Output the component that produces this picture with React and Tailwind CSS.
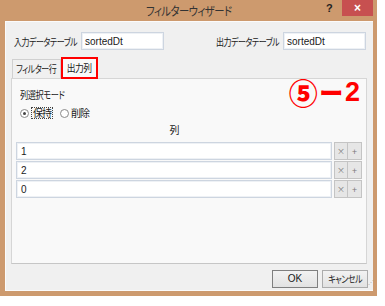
import React from "react";

const jp = { fontFamily: '"Noto Sans CJK JP", sans-serif', fontFeatureSettings: '"palt"' };

function Input({ value, className = "" }) {
  return (
    <div
      className={`h-[18px] bg-white border border-[#cdd5e0] shadow-[inset_0_0_0_1px_#eef1f5] flex items-center pl-[3px] text-[10px] text-[#1a1a1a] ${className}`}
      style={{ fontFamily: '"Liberation Sans", sans-serif' }}
    >
      {value}
    </div>
  );
}

function Row({ value }) {
  return (
    <div className="flex items-stretch h-[18px]">
      <Input value={value} className="w-[317px] h-[18px] pl-[4px]" />
      <div className="ml-[2px] w-[14px] bg-[#e6e6e6] border border-[#c4c4c4] flex items-center justify-center text-[8px] text-[#7a7a7a] leading-none">×</div>
      <div className="w-[14px] bg-[#e6e6e6] border border-[#c4c4c4] border-l-0 flex items-center justify-center text-[9px] text-[#7a7a7a] leading-none">+</div>
    </div>
  );
}

export default function App() {
  return (
    <div className="w-[385px] h-[306px] bg-white overflow-hidden" style={jp}>
      <div className="w-[377px] h-[296px] bg-[#cd9a6e] flex flex-col">
        {/* Title bar */}
        <div className="h-[21px] flex items-start shrink-0">
          <div className="w-[51px]" />
          <div className="flex-1 flex justify-center pt-[4px] text-[12px] tracking-[-0.6px] text-[#333] leading-[14px] whitespace-nowrap">
            <span className="inline-block scale-x-[0.86]">フィルターウィザード</span>
          </div>
          <div className="w-[16px] pt-[2px] text-[11px] font-bold text-[#222] leading-[12px]" style={{ fontFamily: '"Liberation Sans", sans-serif' }}>?</div>
          <div className="w-[31px] h-[16px] bg-[#c75050] flex items-center justify-center text-white text-[12px] font-bold leading-none" style={{ fontFamily: '"Liberation Sans", sans-serif' }}>
            ×
          </div>
          <div className="w-[4px]" />
        </div>

        {/* Client */}
        <div className="ml-[5px] mr-[4px] h-[270px] border-l border-t border-b border-[#fbfbfb] bg-[#f0f0f0] flex flex-col">
          <div className="flex items-center justify-between pt-[10px] pl-[8px] pr-[7px] text-[10px] text-[#1a1a1a]">
            <div className="flex items-center">
              <span className="w-[67px] whitespace-nowrap">
                <span className="inline-block origin-left scale-x-[0.8] tracking-[-0.6px]">入力データテーブル</span>
              </span>
              <Input value="sortedDt" className="w-[83px]" />
            </div>
            <div className="flex items-center">
              <span className="w-[67px] whitespace-nowrap">
                <span className="inline-block origin-left scale-x-[0.8] tracking-[-0.6px]">出力データテーブル</span>
              </span>
              <Input value="sortedDt" className="w-[83px]" />
            </div>
          </div>

          {/* Tabs */}
          <div className="flex items-end mt-[6px] ml-[5px] h-[22px] text-[10px] text-[#1a1a1a]">
            <div className="h-[19px] w-[49px] ml-[1px] border border-b-0 border-[#d0d0d0] bg-[#f0f0f0] flex items-center justify-center leading-none whitespace-nowrap">
              <span className="inline-block scale-x-[0.8] tracking-[-0.6px]">フィルター行</span>
            </div>
            <div className="h-[22px] w-[37px] border-2 border-[#ff0000] bg-[#f9f9f9] flex items-center justify-center leading-none relative z-10 -mb-[1px] whitespace-nowrap">
              <span className="inline-block scale-x-[0.88] tracking-[-0.6px]">出力列</span>
            </div>
          </div>

          {/* Panel */}
          <div className="ml-[5px] w-[356px] h-[186px] border border-[#d6d6d6] border-b-[#c6c6c6] bg-[#f9f9f9] flex flex-col px-[4px]">
            <div className="flex justify-between">
              <div className="pl-[4px] pt-[10px] text-[10px] text-[#1a1a1a]">
                <div className="leading-[12px] whitespace-nowrap">
                  <span className="inline-block origin-left scale-x-[0.82] tracking-[-0.5px]">列選択モード</span>
                </div>
                <div className="flex items-center mt-[6px] h-[12px] whitespace-nowrap">
                  <div className="w-[9px] h-[9px] rounded-full border border-[#8a8a8a] bg-white flex items-center justify-center">
                    <div className="w-[3px] h-[3px] rounded-full bg-[#444]" />
                  </div>
                  <span className="ml-[2px] px-[1px] border border-dotted border-[#444] leading-[10px] tracking-[-1px]">保持</span>
                  <div className="ml-[7px] w-[9px] h-[9px] rounded-full border border-[#8a8a8a] bg-white" />
                  <span className="ml-[2px] leading-[10px] tracking-[-1px]">削除</span>
                </div>
              </div>
              <div className="flex items-center pt-[0px] pr-[2px] text-[#ff0000] font-black h-[26px] whitespace-nowrap">
                <span className="text-[29px] leading-none" style={{ fontFamily: '"Noto Sans CJK JP", sans-serif' }}>⑤</span>
                <span className="text-[24px] leading-none ml-[2px]" style={{ fontFamily: '"Noto Sans CJK JP", sans-serif' }}>ー</span>
                <span className="text-[27px] leading-none ml-[2px] font-bold" style={{ fontFamily: '"Liberation Sans", sans-serif' }}>2</span>
              </div>
            </div>
            <div className="w-[317px] flex justify-center mt-[5px] text-[10px] text-[#1a1a1a] leading-[12px]">列</div>
            <div className="flex flex-col gap-[1px] mt-[6px]">
              <Row value="1" />
              <Row value="2" />
              <Row value="0" />
            </div>
          </div>

          {/* Bottom buttons */}
          <div className="flex justify-end items-start mt-[6px] pr-[5px] text-[10px] text-[#1a1a1a] relative">
            <div className="w-[46px] h-[18px] border border-[#7f7f7f] bg-gradient-to-b from-[#f2f2f2] to-[#e2e2e2] flex items-center justify-center leading-none" style={{ fontFamily: '"Liberation Sans", sans-serif' }}>
              OK
            </div>
            <div className="ml-[4px] w-[46px] h-[18px] border border-[#acacac] bg-gradient-to-b from-[#f2f2f2] to-[#e2e2e2] flex items-center justify-center leading-none whitespace-nowrap">
              <span className="inline-block scale-x-[0.8] tracking-[-0.6px]">キャンセル</span>
            </div>
            <div className="absolute right-[0px] top-[10px] w-[5px] h-[8px] text-[6px] leading-[3px] text-[#aaa]">⋰</div>
          </div>
        </div>
      </div>
    </div>
  );
}
